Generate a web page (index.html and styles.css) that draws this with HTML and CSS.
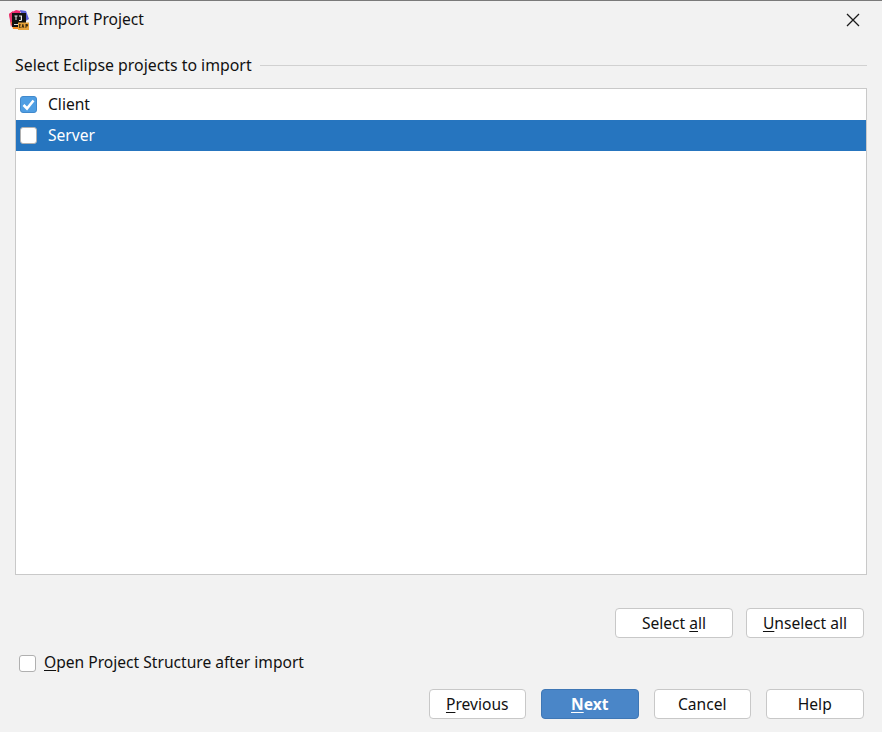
FILE: index.html
```html
<!DOCTYPE html>
<html lang="en">
<head>
<meta charset="utf-8">
<title>Import Project</title>
<link rel="stylesheet" href="styles.css">
</head>
<body>
<div class="dialog">
  <header class="titlebar">
    <svg class="logo" width="20" height="20" viewBox="0 0 20 20" aria-hidden="true">
      <path d="M0 4 L7 0 L12 1 L8 9 L2 13Z" fill="#f0286e"/>
      <path d="M0 4 L4 1 L6 8 L2 17 Z" fill="#e8336b"/>
      <path d="M11 0 L17 1 L20 9 L15 12Z" fill="#5a5fd6"/>
      <path d="M2 12 L4 19 L11 19 L8 12Z" fill="#f58a1f"/>
      <rect x="3" y="3" width="14" height="14" fill="#111"/>
      <rect x="5" y="14" width="5" height="1" fill="#ddd"/>
      <path d="M5.500 5.500h3v1h-1v3.500h-1v-3.500h-1z M10 5.500h3v4.500q0 1-1 1h-2v-1h1.800v-3.500h-1.800z" fill="#eee"/>
      <rect x="9" y="12.500" width="11" height="7.500" fill="#e8a33a"/>
      <path d="M10 14h1.800v.8h-1v.7h.9v.7h-.9v.8h1v.8h-1.800z M12.500 18h.8l.2-1h.8l.2 1h.8l-1-4h-.9z M16.500 14h1.500q1 0 1 1.200t-1 1.200h-.7v1.600h-.8z" fill="#3a2a10"/>
    </svg>
    <span class="title">Import Project</span>
    <svg class="close" width="14" height="14" viewBox="0 0 14 14" aria-hidden="true">
      <path d="M1 1 L13 13 M13 1 L1 13" stroke="#1a1a1a" stroke-width="1.300" fill="none"/>
    </svg>
  </header>

  <main class="content">
    <div class="group-title">
      <span>Select Eclipse projects to import</span>
      <span class="rule"></span>
    </div>

    <ul class="list">
      <li class="row">
        <span class="check check-on">
          <svg width="13" height="12" viewBox="0 0 13 12" aria-hidden="true"><path d="M1.500 6 L5 9.500 L11.500 1.500" stroke="#fff" stroke-width="2.600" fill="none"/></svg>
        </span>
        <span class="label">Client</span>
      </li>
      <li class="row row-selected">
        <span class="check check-off"></span>
        <span class="label">Server</span>
      </li>
    </ul>

    <div class="select-actions">
      <button class="btn btn-select" type="button">Select <u>a</u>ll</button>
      <button class="btn btn-select" type="button"><u>U</u>nselect all</button>
    </div>

    <label class="open-option">
      <span class="check check-off"></span>
      <span class="label"><u>O</u>pen Project Structure after import</span>
    </label>

    <div class="footer">
      <button class="btn btn-foot" type="button"><u>P</u>revious</button>
      <button class="btn btn-foot btn-primary" type="button"><u>N</u>ext</button>
      <button class="btn btn-foot" type="button">Cancel</button>
      <button class="btn btn-foot" type="button">Help</button>
    </div>
  </main>
</div>
</body>
</html>
```
FILE: styles.css
```css
* { box-sizing: border-box; }
html, body { margin: 0; padding: 0; }
body {
  width: 882px;
  height: 732px;
  overflow: hidden;
  background: #f2f2f2;
  color: #111;
  font-family: "Noto Sans", "Open Sans", sans-serif;
  font-size: 15.6px;
  line-height: 20px;
}
.dialog {
  height: 732px;
  border-top: 1px solid #7a7a7a;
  display: flex;
  flex-direction: column;
}
.titlebar {
  height: 37px;
  display: flex;
  align-items: center;
  padding: 0 22px 0 9px;
}
.logo { flex: none; }
.title { margin-left: 9px; flex: 1; position: relative; top: -1px; }
.close { flex: none; }
.content {
  flex: 1;
  display: flex;
  flex-direction: column;
  padding: 17px 15px 0;
}
.group-title {
  height: 20px;
  display: flex;
  align-items: center;
  gap: 8px;
  font-size: 15.85px;
}
.rule { flex: 1; height: 1px; background: #d1d1d1; }
.list {
  list-style: none;
  margin: 13px 0 0;
  padding: 0;
  height: 487px;
  background: #fff;
  border: 1px solid #c9c9c9;
}
.row {
  height: 31px;
  display: flex;
  align-items: center;
  gap: 11px;
  padding-left: 4px;
}
.label { position: relative; top: -1px; }
.row-selected { background: #2675bf; color: #fff; }
.check {
  flex: none;
  width: 17px;
  height: 17px;
  border-radius: 3px;
  display: flex;
  align-items: center;
  justify-content: center;
}
.check-on { background: #4f9ee3; border: 1px solid #4189cc; }
.check-off { background: #fff; border: 1px solid #b0b0b0; }
.select-actions {
  margin-top: 33px;
  padding-right: 3px;
  display: flex;
  justify-content: flex-end;
  gap: 13px;
}
.btn {
  font: inherit;
  color: inherit;
  background: #fff;
  border: 1px solid #c8c8c8;
  border-radius: 4px;
  padding: 0;
  height: 30px;
}
.btn-select { width: 118px; }
.open-option {
  margin-top: 15px;
  padding-left: 4px;
  height: 20px;
  display: flex;
  align-items: center;
  gap: 8px;
}
.footer {
  margin-top: 16px;
  padding-right: 3.500px;
  display: flex;
  justify-content: flex-end;
  gap: 15px;
}
.btn-foot { width: 97.500px; }
.btn-primary {
  background: #4a86c8;
  border-color: #3f77b5;
  color: #fff;
  font-weight: 700;
}
u { text-underline-offset: 2px; }
```
